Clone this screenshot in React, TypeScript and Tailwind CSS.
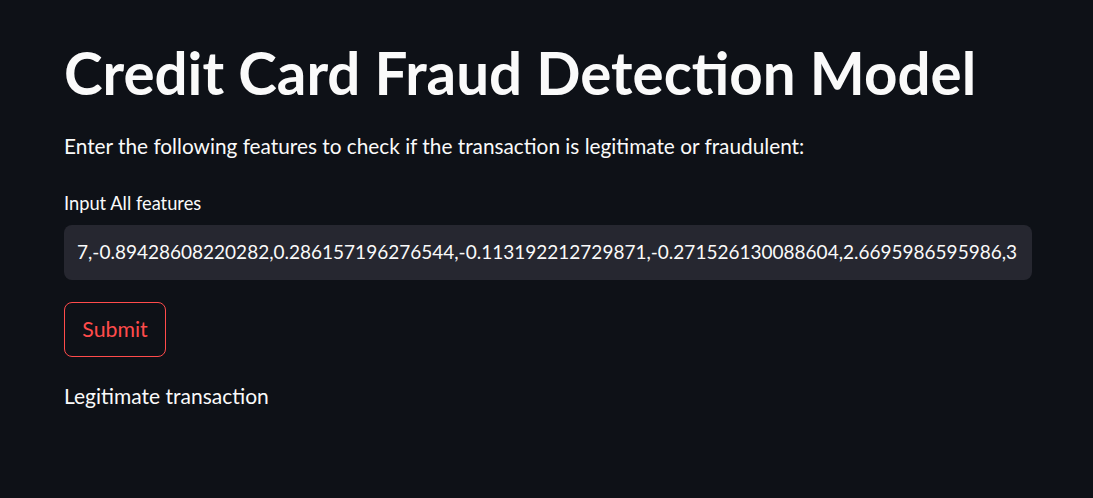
export default function App() {
  const value =
    "7,-0.89428608220282,0.286157196276544,-0.113192212729871,-0.271526130088604,2.6695986595986,3";
  return (
    <div
      className="min-h-[498px] w-full bg-[#0e1117] text-[#fafafa]"
      style={{ fontFamily: "Lato, 'Noto Sans', sans-serif" }}
    >
      <div className="w-[968px] ml-[64px] pt-[37px] flex flex-col">
        <h1 className="text-[58.3px] font-bold leading-[70px] tracking-[0px]">
          Credit Card Fraud Detection Model
        </h1>
        <p className="mt-[24px] text-[20.8px] leading-[30px]">
          Enter the following features to check if the transaction is legitimate or fraudulent:
        </p>
        <label className="mt-[30px] text-[18.3px] leading-[24px]">Input All features</label>
        <div className="mt-[10px] h-[55px] rounded-[8px] bg-[#262730] flex items-center pl-[13px] overflow-hidden">
          <span className="text-[19px] whitespace-nowrap">{value}</span>
        </div>
        <button className="mt-[22px] w-[102px] h-[55px] rounded-[8px] border border-[#ff4b4b] text-[#ff4b4b] text-[21.3px]">
          Submit
        </button>
        <p className="mt-[24px] text-[21px] leading-[30px]">Legitimate transaction</p>
      </div>
    </div>
  );
}
